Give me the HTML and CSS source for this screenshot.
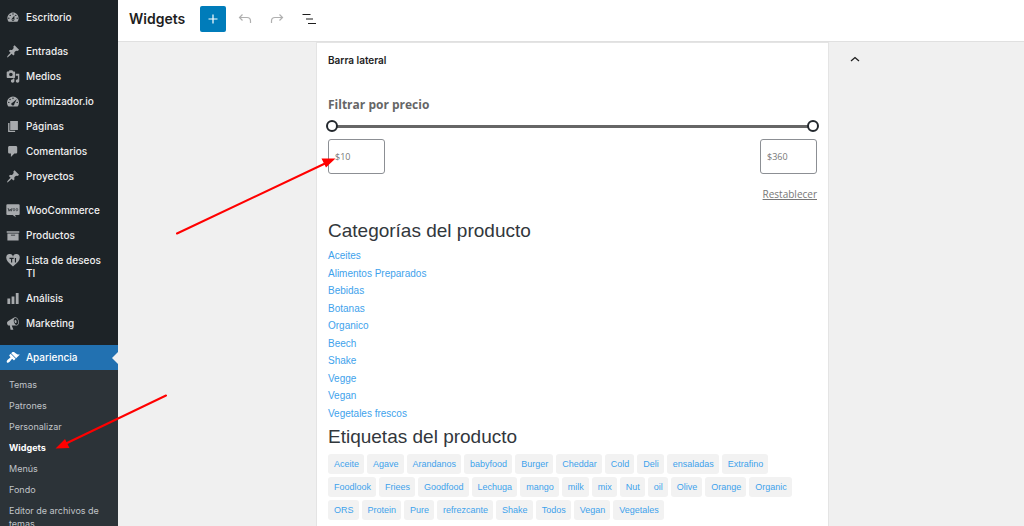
FILE: index.html
```html
<!DOCTYPE html>
<html lang="es">
<head>
<meta charset="utf-8">
<meta name="viewport" content="width=device-width, initial-scale=1">
<title>Widgets</title>
<link rel="stylesheet" href="styles.css">
</head>
<body>
<svg class="sprite" aria-hidden="true">
  <symbol id="i-dashboard" viewBox="0 0 20 20"><path fill-rule="evenodd" d="M3.76 16h12.48c1.1-1.37 1.76-3.11 1.76-5 0-4.42-3.58-8-8-8s-8 3.58-8 8c0 1.89.66 3.63 1.76 5zM10 4c.55 0 1 .45 1 1s-.45 1-1 1-1-.45-1-1 .45-1 1-1zM6 6c.55 0 1 .45 1 1s-.45 1-1 1-1-.45-1-1 .45-1 1-1zm8 0c.55 0 1 .45 1 1s-.45 1-1 1-1-.45-1-1 .45-1 1-1zm-5.37 5.55L12 7v6c0 1.1-.9 2-2 2s-2-.9-2-2c0-.57.24-1.08.63-1.45zM4 10c.55 0 1 .45 1 1s-.45 1-1 1-1-.45-1-1 .45-1 1-1zm12 0c.55 0 1 .45 1 1s-.45 1-1 1-1-.45-1-1 .45-1 1-1zm-5 3c0-.55-.45-1-1-1s-1 .45-1 1 .45 1 1 1 1-.45 1-1z"/></symbol>
  <symbol id="i-gauge" viewBox="0 0 20 20"><path fill-rule="evenodd" d="M3.4 17h13.2A8.6 8.6 0 1 0 3.4 17zM10 4.300a1 1 0 1 1 0 2 1 1 0 0 1 0-2zM5.800 6.200a1 1 0 1 1 0 2 1 1 0 0 1 0-2zM4 10.300a1 1 0 1 1 0 2 1 1 0 0 1 0-2zm12 0a1 1 0 1 1 0 2 1 1 0 0 1 0-2zM15.500 6.500l-3.600 6.900a2.200 2.200 0 1 1-2.300-2z"/></symbol>
  <symbol id="i-pin" viewBox="0 0 20 20"><path d="M10.440 3.020l1.820-1.820 6.360 6.350-1.830 1.820c-1.050-.68-2.480-.57-3.410.36l-.75.75c-.92.93-1.040 2.350-.35 3.410l-1.830 1.820-2.410-2.410-2.800 2.790c-.42.42-3.380 2.710-3.800 2.290s1.860-3.390 2.280-3.810l2.790-2.790L4.100 9.360l1.830-1.820c1.050.69 2.480.57 3.400-.36l.75-.75c.93-.92 1.050-2.350.36-3.410z"/></symbol>
  <symbol id="i-media" viewBox="0 0 20 20"><path fill-rule="evenodd" d="M13 11V4c0-.55-.45-1-1-1h-1.670L9 1H5L3.670 3H2c-.55 0-1 .45-1 1v7c0 .55.45 1 1 1h10c.55 0 1-.45 1-1zM7 4.500c1.380 0 2.500 1.120 2.500 2.500S8.380 9.500 7 9.500 4.500 8.380 4.500 7 5.620 4.500 7 4.500zM14 6h5v10.500c0 1.380-1.120 2.500-2.500 2.500S14 17.880 14 16.500s1.120-2.500 2.500-2.500c.17 0 .34.02.5.05V9h-3V6zm-4 8.050V13h2v3.500c0 1.380-1.120 2.500-2.500 2.500S7 17.880 7 16.500 8.120 14 9.500 14c.17 0 .34.02.5.05z"/></symbol>
  <symbol id="i-page" viewBox="0 0 20 20"><path d="M6 15V2h11v13H6zm-1 1h8v2H3V5h2v11z"/></symbol>
  <symbol id="i-comment" viewBox="0 0 20 20"><path d="M5 2h9c1.100 0 2 .9 2 2v7c0 1.100-.9 2-2 2h-2l-5 5v-5H5c-1.100 0-2-.9-2-2V4c0-1.100.9-2 2-2z"/></symbol>
  <symbol id="i-woo" viewBox="0 0 20 20"><path d="M2 1h16a1.500 1.500 0 0 1 1.500 1.500V15a1.500 1.500 0 0 1-1.500 1.500h-5l1 3-4.500-3H2A1.500 1.500 0 0 1 .5 15V2.500A1.500 1.500 0 0 1 2 1z"/><path d="M3 6.500l1.300 4.500L6 8l1.400 3 1.200-4.500" fill="none" stroke="#1d2327" stroke-width="1"/><ellipse cx="11.400" cy="8.800" rx="1.200" ry="1.800" fill="none" stroke="#1d2327" stroke-width=".8"/><ellipse cx="15.600" cy="8.800" rx="1.200" ry="1.800" fill="none" stroke="#1d2327" stroke-width=".8"/></symbol>
  <symbol id="i-archive" viewBox="0 0 20 20"><path fill-rule="evenodd" d="M19 4v2H1V4h18zM2 7h16v10H2V7zm11 3V9H7v1h6z"/></symbol>
  <symbol id="i-heart" viewBox="0 0 20 20"><path d="M10 18.500C6 15 .5 11 .5 6.500a4.800 4.800 0 0 1 9.500-2 4.800 4.800 0 0 1 9.500 2c0 4.500-5.500 8.500-9.500 12z"/><path d="M5 7h6M8 7v6M13.500 6.300V13" fill="none" stroke="#1d2327" stroke-width="1.700"/></symbol>
  <symbol id="i-chart" viewBox="0 0 20 20"><path d="M18 18V2h-4v16h4zm-6 0V7H8v11h4zm-6 0v-8H2v8h4z"/></symbol>
  <symbol id="i-megaphone" viewBox="0 0 20 20"><path fill-rule="evenodd" d="M18.150 5.940c.46 1.620.38 3.220-.02 4.480-.42 1.280-1.260 2.180-2.300 2.480-.16.06-.26.06-.4.06-.06.02-.12.02-.18.02-.06.02-.14.02-.22.02h-6.800l2.220 5.500c.02.14-.06.26-.14.34-.08.1-.24.16-.34.16H6.950c-.1 0-.26-.06-.34-.16-.08-.08-.16-.2-.14-.34l-1-5.500H4.250l-.02-.02c-.5.06-1.080-.18-1.540-.62s-.88-1.080-1.060-1.880c-.24-.8-.2-1.560-.02-2.200.18-.62.58-1.080 1.060-1.300l.02-.02 9-5.400c.1-.06.18-.1.24-.16.06-.04.14-.08.24-.12.16-.08.28-.12.5-.18 1.040-.3 2.240.1 3.220.98s1.840 2.240 2.260 3.860zm-2.580 5.980h-.02c.4-.1.74-.34 1.040-.7.58-.7.86-1.760.86-3.040 0-.64-.1-1.300-.28-1.980-.34-1.360-1.020-2.500-1.780-3.240s-1.680-1.100-2.460-.88c-.82.22-1.400.96-1.700 2-.32 1.040-.28 2.360.06 3.720.38 1.360 1 2.500 1.800 3.240.78.74 1.620 1.100 2.480.88zm-2.540-7.080c.22-.04.42-.02.62.04.38.16.76.48 1.020 1s.42 1.200.42 1.780c0 .3-.04.56-.12.8-.18.48-.44.84-.86.94-.34.1-.8-.06-1.140-.4s-.64-.86-.78-1.500c-.18-.62-.12-1.240.02-1.720s.48-.84.82-.94z"/></symbol>
  <symbol id="i-brush" viewBox="0 0 20 20"><path d="M14.480 11.060L7.410 3.990l1.500-1.500c.5-.56 2.300-.47 3.510.32 1.210.8 1.430 1.280 2.910 2.100 1.180.64 2.450 1.260 4.450.85zm-.71.71L6.700 4.700 4.930 6.470c-.39.39-.39 1.020 0 1.410l1.060 1.060c.39.39.39 1.030 0 1.420-.6.6-1.430 1.110-2.210 1.690-.35.26-.7.53-1.010.84C1.430 14.230.4 16.080 1.400 17.070c.99 1 2.840-.03 4.180-1.360.31-.31.58-.66.85-1.020.57-.78 1.080-1.610 1.690-2.210.39-.39 1.020-.39 1.410 0l1.060 1.060c.39.39 1.020.39 1.410 0z"/></symbol>
</svg>

<div class="app">
  <nav class="sidebar" aria-label="Menú principal">
    <ul class="menu">
      <li><a class="menu-link" href="#"><svg class="icon"><use href="#i-dashboard"/></svg><span>Escritorio</span></a></li>
      <li class="group"><a class="menu-link" href="#"><svg class="icon"><use href="#i-pin"/></svg><span>Entradas</span></a></li>
      <li><a class="menu-link" href="#"><svg class="icon"><use href="#i-media"/></svg><span>Medios</span></a></li>
      <li><a class="menu-link" href="#"><svg class="icon"><use href="#i-gauge"/></svg><span>optimizador.io</span></a></li>
      <li><a class="menu-link" href="#"><svg class="icon"><use href="#i-page"/></svg><span>Páginas</span></a></li>
      <li><a class="menu-link" href="#"><svg class="icon"><use href="#i-comment"/></svg><span>Comentarios</span></a></li>
      <li><a class="menu-link" href="#"><svg class="icon"><use href="#i-pin"/></svg><span>Proyectos</span></a></li>
      <li class="group"><a class="menu-link" href="#"><svg class="icon"><use href="#i-woo"/></svg><span>WooCommerce</span></a></li>
      <li><a class="menu-link" href="#"><svg class="icon"><use href="#i-archive"/></svg><span>Productos</span></a></li>
      <li><a class="menu-link" href="#"><svg class="icon"><use href="#i-heart"/></svg><span>Lista de deseos TI</span></a></li>
      <li><a class="menu-link" href="#"><svg class="icon"><use href="#i-chart"/></svg><span>Análisis</span></a></li>
      <li><a class="menu-link" href="#"><svg class="icon"><use href="#i-megaphone"/></svg><span>Marketing</span></a></li>
      <li class="group"><a class="menu-link current" href="#"><svg class="icon"><use href="#i-brush"/></svg><span>Apariencia</span></a>
        <ul class="submenu">
          <li><a href="#">Temas</a></li>
          <li><a href="#">Patrones</a></li>
          <li><a href="#">Personalizar</a></li>
          <li><a class="active" href="#" aria-current="page">Widgets</a></li>
          <li><a href="#">Menús</a></li>
          <li><a href="#">Fondo</a></li>
          <li><a href="#">Editor de archivos de temas</a></li>
        </ul>
      </li>
    </ul>
  </nav>

  <div class="editor">
    <header class="toolbar">
      <h1>Widgets</h1>
      <button class="tool add" type="button" aria-label="Añadir bloque"><svg viewBox="0 0 18 18"><path d="M9 4.500v9M4.500 9h9"/></svg></button>
      <button class="tool muted" type="button" aria-label="Deshacer"><svg viewBox="0 0 18 18"><path d="M6.500 4.500L3.500 7.500l3 3M3.500 7.500H11q3.500 0 3.500 3.500v2"/></svg></button>
      <button class="tool muted" type="button" aria-label="Rehacer"><svg viewBox="0 0 18 18"><path d="M11.500 4.500l3 3-3 3M14.500 7.500H7q-3.500 0-3.500 3.500v2"/></svg></button>
      <button class="tool" type="button" aria-label="Vista de lista"><svg viewBox="0 0 18 18"><path d="M2.500 4.500h8M6 9h7M8 13.500h8"/></svg></button>
    </header>

    <main class="canvas">
      <section class="panel">
        <h2 class="panel-title">Barra lateral</h2>
        <h3 class="filter-title">Filtrar por precio</h3>
        <div class="slider">
          <input type="range" min="10" max="360" value="10" aria-label="Precio mínimo">
          <input type="range" min="10" max="360" value="360" aria-label="Precio máximo">
        </div>
        <div class="prices">
          <input type="text" value="$10" aria-label="Desde">
          <input type="text" value="$360" aria-label="Hasta">
        </div>
        <a class="reset" href="#">Restablecer</a>

        <h2 class="widget-title">Categorías del producto</h2>
        <ul class="categories">
          <li><a href="#">Aceites</a></li>
          <li><a href="#">Alimentos Preparados</a></li>
          <li><a href="#">Bebidas</a></li>
          <li><a href="#">Botanas</a></li>
          <li><a href="#">Organico</a></li>
          <li><a href="#">Beech</a></li>
          <li><a href="#">Shake</a></li>
          <li><a href="#">Vegge</a></li>
          <li><a href="#">Vegan</a></li>
          <li><a href="#">Vegetales frescos</a></li>
        </ul>

        <h2 class="widget-title">Etiquetas del producto</h2>
        <div class="tags">
          <a href="#">Aceite</a><a href="#">Agave</a><a href="#">Arandanos</a><a href="#">babyfood</a><a href="#">Burger</a><a href="#">Cheddar</a><a href="#">Cold</a><a href="#">Deli</a><a href="#">ensaladas</a><a href="#">Extrafino</a>
          <a href="#">Foodlook</a><a href="#">Friees</a><a href="#">Goodfood</a><a href="#">Lechuga</a><a href="#">mango</a><a href="#">milk</a><a href="#">mix</a><a href="#">Nut</a><a href="#">oil</a><a href="#">Olive</a><a href="#">Orange</a><a href="#">Organic</a>
          <a href="#">ORS</a><a href="#">Protein</a><a href="#">Pure</a><a href="#">refrezcante</a><a href="#">Shake</a><a href="#">Todos</a><a href="#">Vegan</a><a href="#">Vegetales</a>
        </div>
      </section>
      <button class="collapse" type="button" aria-label="Contraer"><svg viewBox="0 0 10 6"><path d="M1 5l4-3.500L9 5"/></svg></button>
    </main>
  </div>
</div>

<svg class="arrows" viewBox="0 0 340 460" aria-hidden="true">
  <path class="shaft" d="M177 233.500L325 163.500M166 395.500L66 443.500"/>
  <path d="M335.500 158.500L326 167.500L321.500 158.500zM55.500 448.500L65 439L69.500 448z"/>
</svg>
</body>
</html>
```

FILE: styles.css
```css
* {
  box-sizing: border-box;
}

body {
  margin: 0;
  font-family: Inter, "Open Sans", sans-serif;
  color: #1e1e1e;
  background: #f0f0f0;
}

ul {
  list-style: none;
  margin: 0;
  padding: 0;
}

h1, h2, h3 {
  margin: 0;
}

a {
  text-decoration: none;
}

button {
  padding: 0;
  border: 0;
  background: none;
  color: inherit;
}

.sprite {
  display: none;
}

.app {
  display: flex;
  height: 100vh;
  overflow: hidden;
}

/* Admin menu */
.sidebar {
  flex: 0 0 118px;
  overflow: hidden;
  padding-top: 5px;
  background: #1d2327;
}

.group {
  margin-top: 9px;
}

.menu-link {
  position: relative;
  display: flex;
  align-items: flex-start;
  gap: 6px;
  padding: 6px 8px 6px 6px;
  font-size: 10px;
  font-weight: 500;
  line-height: 13px;
  color: #f0f0f1;
}

.icon {
  flex: none;
  width: 14px;
  height: 15px;
  margin: -1px 0;
  fill: #a7aaad;
}

.current {
  background: #2271b1;
  color: #fff;
}

.current .icon {
  fill: #fff;
}

.current::after {
  content: "";
  position: absolute;
  top: 50%;
  right: 0;
  border: 6px solid transparent;
  border-left-width: 0;
  border-right-color: #f0f0f0;
  transform: translateY(-50%);
}

.submenu {
  padding: 4px 0;
  background: #2c3338;
}

.submenu a {
  display: block;
  padding: 4px 9px;
  font-size: 9px;
  line-height: 13px;
  color: #c0c4c8;
}

.submenu .active {
  font-weight: 700;
  color: #fff;
}

/* Editor */
.editor {
  flex: 1;
  min-width: 0;
  display: flex;
  flex-direction: column;
}

.toolbar {
  flex: none;
  display: flex;
  align-items: center;
  gap: 6px;
  padding: 6px 11px 9px;
  border-bottom: 1px solid #e0e0e0;
  background: #fff;
}

.toolbar h1 {
  margin-right: 9px;
  font-size: 14px;
  line-height: 20px;
  font-weight: 600;
}

.tool {
  display: flex;
  align-items: center;
  justify-content: center;
  width: 26px;
  height: 26px;
  border-radius: 2px;
}

.tool svg {
  width: 18px;
  height: 18px;
  fill: none;
  stroke: currentColor;
  stroke-width: 1.2;
}

.add {
  background: #007cba;
  color: #fff;
}

.muted {
  color: #b0b0b0;
}

.canvas {
  flex: 1;
  min-height: 0;
  display: grid;
  grid-template-columns: 1fr minmax(0, 513px) 1fr;
  padding-left: 3px;
}

.panel {
  grid-column: 2;
  padding: 11px;
  border: 1px solid #e4e4e4;
  background: #fff;
}

.collapse {
  display: flex;
  align-items: center;
  justify-content: center;
  width: 26px;
  height: 26px;
  margin: 4px 13px;
}

.collapse svg {
  width: 10px;
  height: 6px;
  fill: none;
  stroke: #1e1e1e;
  stroke-width: 1.3;
}

.panel-title {
  font-size: 10px;
  line-height: 13px;
  font-weight: 600;
}

.filter-title {
  margin-top: 28px;
  font: 700 12px/20px "Open Sans", sans-serif;
  color: #666;
}

.slider {
  display: grid;
  margin: 4px -2px 0;
}

.slider input {
  grid-area: 1 / 1;
  width: 100%;
  height: 14px;
  margin: 0;
  appearance: none;
  background: linear-gradient(#666, #666) center / calc(100% - 12px) 3px no-repeat;
  pointer-events: none;
}

.slider input + input {
  background: none;
}

.slider input::-webkit-slider-thumb {
  appearance: none;
  width: 12px;
  height: 12px;
  border: 2px solid #23282d;
  border-radius: 50%;
  background: #fff;
  pointer-events: auto;
}

.prices {
  display: flex;
  justify-content: space-between;
  margin-top: 6px;
}

.prices input {
  width: 57px;
  height: 35px;
  padding: 0 6px;
  border: 1px solid #8c8f94;
  border-radius: 3px;
  font: 9px/12px "Open Sans", sans-serif;
  color: #777;
}

.reset {
  display: block;
  width: fit-content;
  margin: 12px 0 0 auto;
  font: 10px/16px "Open Sans", sans-serif;
  color: #777;
  text-decoration: underline;
}

.widget-title {
  font: 400 19px/24px "Liberation Sans", Arial, sans-serif;
  color: #32373c;
}

.reset + .widget-title {
  margin-top: 17px;
}

.categories {
  margin: 4px 0 3px;
  font: 10px/1.75 "Liberation Sans", Arial, sans-serif;
}

.categories a,
.tags a {
  color: #3ea2ec;
}

.tags {
  display: flex;
  flex-wrap: wrap;
  gap: 3px;
  margin-top: 5px;
  font: 9px/12px "Liberation Sans", Arial, sans-serif;
}

.tags a {
  padding: 4px 5px 4px 6px;
  border-radius: 3px;
  background: #f2f2f2;
}

/* Annotation arrows drawn over the interface */
.arrows {
  position: absolute;
  top: 0;
  left: 0;
  width: 340px;
  height: 460px;
  fill: #f00;
  pointer-events: none;
}

.shaft {
  stroke: #f00;
  stroke-width: 2;
  stroke-linecap: round;
}
```
